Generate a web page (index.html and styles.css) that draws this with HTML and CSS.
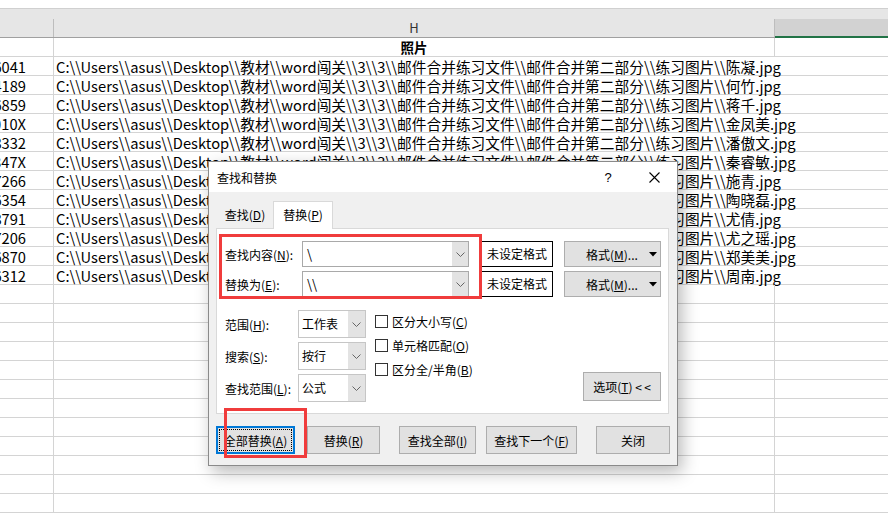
FILE: index.html
```html
<!DOCTYPE html>
<html lang="zh-CN">
<head>
<meta charset="utf-8">
<title>查找和替换</title>
<link rel="stylesheet" href="styles.css">
</head>
<body>
<div class="sheet">
  <div class="topstrip"></div>
  <div class="colhead">
    <div class="ch ch-a"></div>
    <div class="ch ch-h">H</div>
    <div class="ch ch-i"></div>
  </div>
  <div class="row"><div class="c a"></div><div class="c h title">照片</div><div class="c i"></div></div>
  <div class="row data"><div class="c a"><span>36041</span></div><div class="c h">C:\\Users\\asus\\Desktop\\教材\\word闯关\\3\\3\\邮件合并练习文件\\邮件合并第二部分\\练习图片\\陈凝.jpg</div><div class="c i"></div></div>
  <div class="row data"><div class="c a"><span>24189</span></div><div class="c h">C:\\Users\\asus\\Desktop\\教材\\word闯关\\3\\3\\邮件合并练习文件\\邮件合并第二部分\\练习图片\\何竹.jpg</div><div class="c i"></div></div>
  <div class="row data"><div class="c a"><span>36859</span></div><div class="c h">C:\\Users\\asus\\Desktop\\教材\\word闯关\\3\\3\\邮件合并练习文件\\邮件合并第二部分\\练习图片\\蒋千.jpg</div><div class="c i"></div></div>
  <div class="row data"><div class="c a"><span>3010X</span></div><div class="c h">C:\\Users\\asus\\Desktop\\教材\\word闯关\\3\\3\\邮件合并练习文件\\邮件合并第二部分\\练习图片\\金凤美.jpg</div><div class="c i"></div></div>
  <div class="row data"><div class="c a"><span>38332</span></div><div class="c h">C:\\Users\\asus\\Desktop\\教材\\word闯关\\3\\3\\邮件合并练习文件\\邮件合并第二部分\\练习图片\\潘傲文.jpg</div><div class="c i"></div></div>
  <div class="row data"><div class="c a"><span>3847X</span></div><div class="c h">C:\\Users\\asus\\Desktop\\教材\\word闯关\\3\\3\\邮件合并练习文件\\邮件合并第二部分\\练习图片\\秦睿敏.jpg</div><div class="c i"></div></div>
  <div class="row data"><div class="c a"><span>17266</span></div><div class="c h">C:\\Users\\asus\\Desktop\\教材\\word闯关\\3\\3\\邮件合并练习文件\\邮件合并第二部分\\练习图片\\施青.jpg</div><div class="c i"></div></div>
  <div class="row data"><div class="c a"><span>36354</span></div><div class="c h">C:\\Users\\asus\\Desktop\\教材\\word闯关\\3\\3\\邮件合并练习文件\\邮件合并第二部分\\练习图片\\陶晓磊.jpg</div><div class="c i"></div></div>
  <div class="row data"><div class="c a"><span>38791</span></div><div class="c h">C:\\Users\\asus\\Desktop\\教材\\word闯关\\3\\3\\邮件合并练习文件\\邮件合并第二部分\\练习图片\\尤倩.jpg</div><div class="c i"></div></div>
  <div class="row data"><div class="c a"><span>17206</span></div><div class="c h">C:\\Users\\asus\\Desktop\\教材\\word闯关\\3\\3\\邮件合并练习文件\\邮件合并第二部分\\练习图片\\尤之瑶.jpg</div><div class="c i"></div></div>
  <div class="row data"><div class="c a"><span>36870</span></div><div class="c h">C:\\Users\\asus\\Desktop\\教材\\word闯关\\3\\3\\邮件合并练习文件\\邮件合并第二部分\\练习图片\\郑美美.jpg</div><div class="c i"></div></div>
  <div class="row data"><div class="c a"><span>36312</span></div><div class="c h">C:\\Users\\asus\\Desktop\\教材\\word闯关\\3\\3\\邮件合并练习文件\\邮件合并第二部分\\练习图片\\周南.jpg</div><div class="c i"></div></div>
  <div class="row"><div class="c a"></div><div class="c h"></div><div class="c i"></div></div>
  <div class="row"><div class="c a"></div><div class="c h"></div><div class="c i"></div></div>
  <div class="row"><div class="c a"></div><div class="c h"></div><div class="c i"></div></div>
  <div class="row"><div class="c a"></div><div class="c h"></div><div class="c i"></div></div>
  <div class="row"><div class="c a"></div><div class="c h"></div><div class="c i"></div></div>
  <div class="row"><div class="c a"></div><div class="c h"></div><div class="c i"></div></div>
  <div class="row"><div class="c a"></div><div class="c h"></div><div class="c i"></div></div>
  <div class="row"><div class="c a"></div><div class="c h"></div><div class="c i"></div></div>
  <div class="row"><div class="c a"></div><div class="c h"></div><div class="c i"></div></div>
  <div class="row"><div class="c a"></div><div class="c h"></div><div class="c i"></div></div>
  <div class="row"><div class="c a"></div><div class="c h"></div><div class="c i"></div></div>
  <div class="row"><div class="c a"></div><div class="c h"></div><div class="c i"></div></div>
</div>

<div class="dialog">
  <div class="titlebar">
    <span class="dlg-title">查找和替换</span>
    <span class="tb-btn help">?</span>
    <span class="tb-btn close"><svg width="11" height="11" viewBox="0 0 11 11"><path d="M0.5 0.5 L10.5 10.5 M10.5 0.5 L0.5 10.5" stroke="#000" stroke-width="1.1" fill="none"/></svg></span>
  </div>
  <div class="tabs">
    <div class="tab">查找(<u>D</u>)</div>
    <div class="tab active">替换(<u>P</u>)</div>
  </div>
  <div class="panel">
    <div class="frow">
      <span class="flabel">查找内容(<u>N</u>):</span>
      <div class="combo"><span class="val">\</span><span class="drop"><svg width="9" height="5" viewBox="0 0 9 5"><path d="M0.5 0.5 L4.5 4.5 L8.5 0.5" stroke="#666" fill="none"/></svg></span></div>
      <div class="fmtbox">未设定格式</div>
      <div class="btn fmtbtn"><span class="fmtlabel">格式(<u>M</u>)...</span><svg class="tri" width="8" height="5" viewBox="0 0 8 5"><path d="M0 0 H8 L4 4.5 Z" fill="#000"/></svg></div>
    </div>
    <div class="frow second">
      <span class="flabel">替换为(<u>E</u>):</span>
      <div class="combo"><span class="val">\\</span><span class="drop"><svg width="9" height="5" viewBox="0 0 9 5"><path d="M0.5 0.5 L4.5 4.5 L8.5 0.5" stroke="#666" fill="none"/></svg></span></div>
      <div class="fmtbox">未设定格式</div>
      <div class="btn fmtbtn"><span class="fmtlabel">格式(<u>M</u>)...</span><svg class="tri" width="8" height="5" viewBox="0 0 8 5"><path d="M0 0 H8 L4 4.5 Z" fill="#000"/></svg></div>
    </div>
    <div class="opts">
      <div class="sels">
        <div class="srow"><span class="slabel">范围(<u>H</u>):</span><div class="sel"><span class="val">工作表</span><span class="drop"><svg width="9" height="5" viewBox="0 0 9 5"><path d="M0.5 0.5 L4.5 4.5 L8.5 0.5" stroke="#666" fill="none"/></svg></span></div></div>
        <div class="srow"><span class="slabel">搜索(<u>S</u>):</span><div class="sel"><span class="val">按行</span><span class="drop"><svg width="9" height="5" viewBox="0 0 9 5"><path d="M0.5 0.5 L4.5 4.5 L8.5 0.5" stroke="#666" fill="none"/></svg></span></div></div>
        <div class="srow"><span class="slabel">查找范围(<u>L</u>):</span><div class="sel"><span class="val">公式</span><span class="drop"><svg width="9" height="5" viewBox="0 0 9 5"><path d="M0.5 0.5 L4.5 4.5 L8.5 0.5" stroke="#666" fill="none"/></svg></span></div></div>
      </div>
      <div class="checks">
        <div class="crow"><span class="box"></span>区分大小写(<u>C</u>)</div>
        <div class="crow"><span class="box"></span>单元格匹配(<u>O</u>)</div>
        <div class="crow"><span class="box"></span>区分全/半角(<u>B</u>)</div>
      </div>
      <div class="btn optbtn">选项(<u>T</u>)&nbsp;&lt;&thinsp;&lt;</div>
    </div>
  </div>
  <div class="actions">
    <div class="btn b1 default"><span class="focus">全部替换(<u>A</u>)</span></div>
    <div class="btn b2">替换(<u>R</u>)</div>
    <div class="btn b3">查找全部(<u>I</u>)</div>
    <div class="btn b4">查找下一个(<u>F</u>)</div>
    <div class="btn b5">关闭</div>
  </div>
  <div class="redbox r1"></div>
  <div class="redbox r2"></div>
</div>
</body>
</html>
```

FILE: styles.css
```css
html, body {
  margin: 0;
  padding: 0;
  background: #fff;
  overflow: hidden;
}
body {
  width: 888px;
  height: 513px;
  position: relative;
  font-family: "Noto Sans CJK SC", "Liberation Sans", sans-serif;
}

/* ---------- spreadsheet ---------- */
.sheet {
  width: 888px;
}
.topstrip {
  height: 8px;
  border-bottom: 1px solid #d0d0d0;
  background: #fff;
}
.colhead {
  height: 28px;
  background: #e6e6e6;
  border-bottom: 1px solid #a0a0a0;
  display: flex;
  align-items: flex-end;
}
.ch {
  height: 18px;
  line-height: 18px;
  font-size: 13px;
  color: #333;
  text-align: center;
}
.ch-a {
  width: 53px;
  border-right: 1px solid #bdbdbd;
}
.ch-h {
  width: 720px;
  border-right: 1px solid #bdbdbd;
}
.ch-i {
  flex: 1;
  height: 17px;
  background: #d2d2d2;
  border-bottom: 2px solid #217346;
  margin-bottom: -1px;
}
.row {
  display: flex;
  height: 19px;
  box-sizing: border-box;
  border-bottom: 1px solid #d4d4d4;
}
.c {
  height: 18px;
  line-height: 19px;
  font-size: 14.7px;
  color: #000;
  border-right: 1px solid #d4d4d4;
  white-space: nowrap;
}
.c.a {
  width: 26px;
  padding-right: 27px;
  display: flex;
  justify-content: flex-end;
  overflow: hidden;
}
.c.h {
  width: 718px;
  padding-left: 2px;
  letter-spacing: 0.02px;
}
.c.i {
  flex: 1;
  border-right: none;
}
.c.title {
  text-align: center;
  font-weight: bold;
  font-size: 13.5px;
  line-height: 18px;
  padding-left: 0;
  width: 720px;
  letter-spacing: 0;
}
.row.data .c.h {
  border-right-color: transparent;
  overflow: visible;
}

/* ---------- dialog ---------- */
.dialog {
  position: absolute;
  left: 208px;
  top: 161px;
  width: 470px;
  height: 305px;
  box-sizing: border-box;
  border: 1px solid #8a8a8a;
  background: #f0f0f0;
  box-shadow: 4px 6px 16px rgba(0, 0, 0, 0.28);
  font-size: 12px;
  color: #000;
  white-space: nowrap;
}
.dialog u {
  text-decoration: underline;
  text-underline-offset: 1px;
}
.titlebar {
  height: 30px;
  background: #fff;
  display: flex;
  align-items: center;
  padding-left: 8px;
}
.dlg-title {
  font-size: 12px;
  flex: 1;
}
.tb-btn {
  width: 46px;
  height: 30px;
  display: flex;
  align-items: center;
  justify-content: center;
}
.help {
  font-size: 13px;
  font-family: "Liberation Sans", sans-serif;
}
.tabs {
  display: flex;
  align-items: flex-end;
  height: 27px;
  margin: 9px 0 0 8px;
}
.tab {
  width: 56px;
  height: 27px;
  line-height: 27px;
  text-align: center;
}
.tab.active {
  width: 58px;
  height: 27px;
  line-height: 26px;
  background: #fff;
  border: 1px solid #d9d9d9;
  border-bottom: none;
  position: relative;
  z-index: 1;
  margin-bottom: -1px;
}
.panel {
  margin-left: 7px;
  width: 453px;
  height: 186px;
  box-sizing: border-box;
  border: 1px solid #d9d9d9;
  background: #fff;
  padding: 12px 0 0 8px;
}
.frow {
  display: flex;
  align-items: center;
  height: 26px;
}
.frow.second {
  margin-top: 4px;
}
.flabel {
  width: 77px;
}
.combo {
  width: 167px;
  height: 26px;
  box-sizing: border-box;
  border: 1px solid #a9a9a9;
  display: flex;
  background: #fff;
}
.combo .val {
  flex: 1;
  padding-left: 4px;
  line-height: 24px;
  font-size: 13px;
}
.drop {
  width: 16px;
  background: #e3e3e3;
  display: flex;
  align-items: center;
  justify-content: center;
}
.fmtbox {
  margin-left: 12px;
  width: 72px;
  height: 26px;
  box-sizing: border-box;
  border: 1px solid #000;
  background: #fff;
  text-align: center;
  line-height: 24px;
}
.btn {
  box-sizing: border-box;
  border: 1px solid #adadad;
  background: #e1e1e1;
  display: flex;
  align-items: center;
  justify-content: center;
  height: 28px;
}
.fmtbtn {
  margin-left: 11px;
  width: 97px;
  height: 26px;
  justify-content: flex-start;
  padding-left: 21px;
}
.fmtlabel {
  width: 58px;
}
.fmtbtn .tri {
  margin-left: 5px;
}
.opts {
  display: flex;
  margin-top: 13px;
  height: 92px;
}
.sels {
  display: flex;
  flex-direction: column;
  gap: 4px;
}
.srow {
  display: flex;
  align-items: center;
  height: 28px;
}
.slabel {
  width: 73px;
}
.sel {
  width: 68px;
  height: 28px;
  box-sizing: border-box;
  border: 1px solid #c6c6c6;
  display: flex;
  background: #fff;
}
.sel .val {
  flex: 1;
  padding-left: 3px;
  line-height: 26px;
}
.sel .drop {
  width: 17px;
}
.checks {
  margin-left: 9px;
  margin-top: -1px;
  display: flex;
  flex-direction: column;
}
.crow {
  height: 24px;
  display: flex;
  align-items: center;
}
.box {
  width: 13px;
  height: 13px;
  box-sizing: border-box;
  border: 1px solid #333;
  background: #fff;
  margin-right: 4px;
}
.optbtn {
  margin-left: auto;
  margin-right: 7px;
  align-self: flex-end;
  margin-bottom: 1px;
  width: 78px;
  height: 29px;
}
.actions {
  display: flex;
  margin-top: 12px;
  padding-left: 7px;
}
.b1 { width: 79px; }
.b2 { width: 73px; margin-left: 12px; }
.b3 { width: 77px; margin-left: 19px; }
.b4 { width: 91px; margin-left: 10px; }
.b5 { width: 74px; margin-left: 19px; }
.btn.default {
  border: 2px solid #0078d7;
}
.focus {
  display: flex;
  align-items: center;
  justify-content: center;
  width: 71px;
  height: 20px;
  outline: 1px dotted #000;
}
.redbox {
  position: absolute;
  box-sizing: border-box;
  border: 3px solid #f03c3c;
}
.r1 {
  left: 10px;
  top: 72px;
  width: 263px;
  height: 65px;
}
.r2 {
  left: 15px;
  top: 246px;
  width: 83px;
  height: 50px;
}
```
